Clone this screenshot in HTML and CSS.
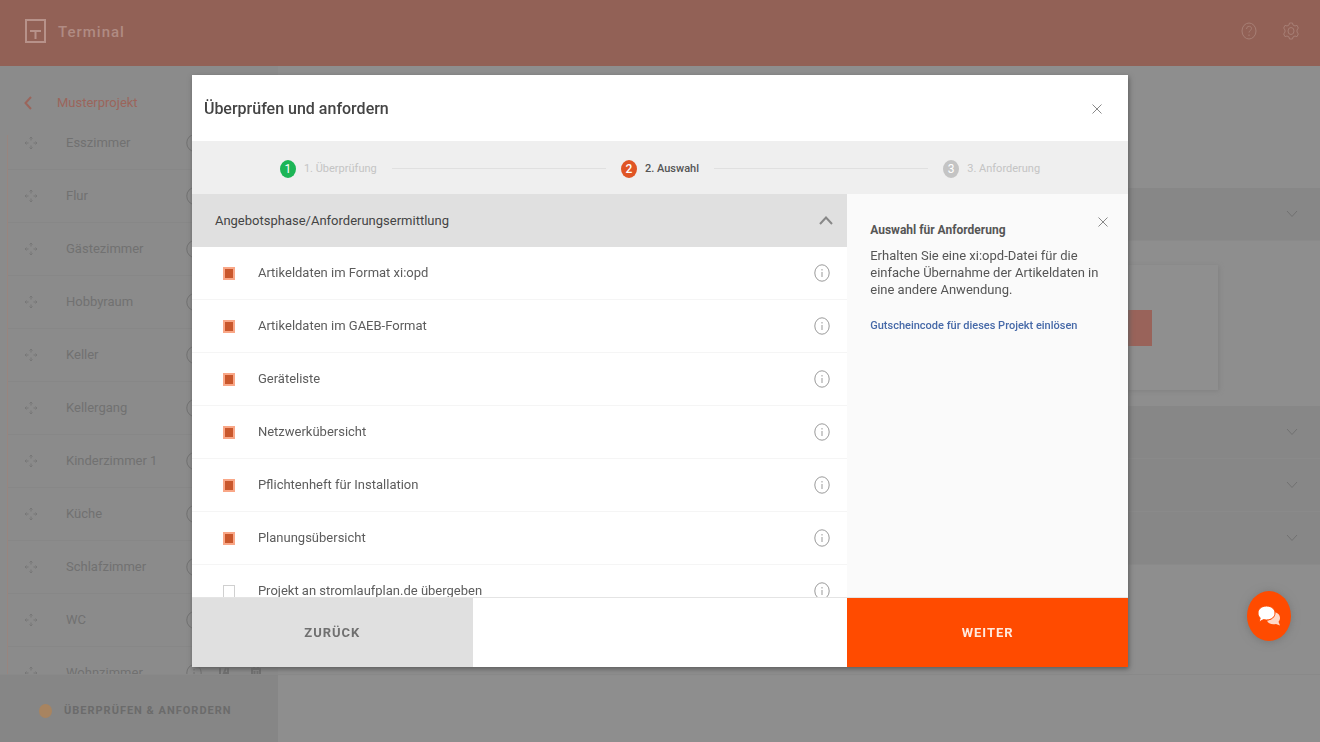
FILE: index.html
```html
<!DOCTYPE html>
<html lang="de">
<head>
<meta charset="utf-8">
<meta name="viewport" content="width=device-width, initial-scale=1">
<title>Terminal</title>
<link rel="stylesheet" href="styles.css">
</head>
<body>
<svg class="defs" aria-hidden="true">
  <symbol id="move" viewBox="0 0 14 14"><path d="M7 1v3.500M7 9.500V13M1 7h3.500M9.500 7H13M5.500 2.500 7 1l1.500 1.500M5.500 11.500 7 13l1.500-1.500M2.500 5.500 1 7l1.500 1.500M11.500 5.500 13 7l-1.500 1.500"/></symbol>
  <symbol id="info" viewBox="0 0 16 18" preserveAspectRatio="none"><ellipse cx="8" cy="9" rx="7.200" ry="8.200"/><path d="M8 8v5M8 5v1.500"/></symbol>
  <symbol id="down" viewBox="0 0 12 8"><path d="m1 1 5 5.500L11 1"/></symbol>
  <symbol id="up" viewBox="0 0 14 9"><path d="m1 8 6-6.500L13 8"/></symbol>
  <symbol id="close" viewBox="0 0 10 10"><path d="m.5.5 9 9m0-9-9 9"/></symbol>
  <symbol id="copy" viewBox="0 0 16 16"><path d="M4 3v11M10 3l-2 5h4v6M12 3v5"/></symbol>
  <symbol id="trash" viewBox="0 0 12 16"><path d="M1 4h10M4 4V1h4v3M2 4v11h8V4M4.500 6v7M7.500 6v7"/></symbol>
</svg>
<div class="page">
  <header class="topbar">
    <svg class="logo" viewBox="0 0 21 24" aria-hidden="true"><path d="M1 1h19v22H1zM5 12h11M10.500 12v8"/></svg>
    <span class="brand">Terminal</span>
    <button class="top-button" aria-label="Hilfe"><svg viewBox="0 0 16 18"><ellipse cx="8" cy="9" rx="7" ry="8"/><path d="M5.500 7c0-3.500 5-3.500 5-.5 0 2-2.500 2-2.500 4M8 12.500V14"/></svg></button>
    <button class="top-button" aria-label="Einstellungen"><svg viewBox="0 0 16 18"><path d="M6.500 1h3l.5 2 2 1 2-.7 1.300 2.700L14 8v2l1.300 2-1.300 2.700-2-.7-2 1-.5 2h-3L6 15l-2-1-2 .7L.7 12 2 10V8L.7 6 2 3.300 4 4l2-1z"/><ellipse cx="8" cy="9" rx="3" ry="3.500"/></svg></button>
  </header>
  <div class="workspace">
    <aside class="sidebar">
      <a class="project" href="#"><svg viewBox="0 0 8 14" aria-hidden="true"><path d="M7 1 1.500 7 7 13"/></svg>Musterprojekt</a>
      <div class="room-window">
        <ul class="rooms">
          <li><svg class="move"><use href="#move"/></svg><span>Esszimmer</span><svg class="info"><use href="#info"/></svg></li>
          <li><svg class="move"><use href="#move"/></svg><span>Flur</span><svg class="info"><use href="#info"/></svg></li>
          <li><svg class="move"><use href="#move"/></svg><span>Gästezimmer</span><svg class="info"><use href="#info"/></svg></li>
          <li><svg class="move"><use href="#move"/></svg><span>Hobbyraum</span><svg class="info"><use href="#info"/></svg></li>
          <li><svg class="move"><use href="#move"/></svg><span>Keller</span><svg class="info"><use href="#info"/></svg></li>
          <li><svg class="move"><use href="#move"/></svg><span>Kellergang</span><svg class="info"><use href="#info"/></svg></li>
          <li><svg class="move"><use href="#move"/></svg><span>Kinderzimmer 1</span><svg class="info"><use href="#info"/></svg></li>
          <li><svg class="move"><use href="#move"/></svg><span>Küche</span><svg class="info"><use href="#info"/></svg></li>
          <li><svg class="move"><use href="#move"/></svg><span>Schlafzimmer</span><svg class="info"><use href="#info"/></svg></li>
          <li><svg class="move"><use href="#move"/></svg><span>WC</span><svg class="info"><use href="#info"/></svg></li>
          <li><svg class="move"><use href="#move"/></svg><span>Wohnzimmer</span><svg class="info"><use href="#info"/></svg><svg class="copy"><use href="#copy"/></svg><svg class="trash"><use href="#trash"/></svg></li>
        </ul>
      </div>
    </aside>
    <main class="content">
      <section class="fold"><svg><use href="#down"/></svg></section>
      <section class="open"><div class="card"><span class="card-action"></span></div></section>
      <section class="fold"><svg><use href="#down"/></svg></section>
      <section class="fold"><svg><use href="#down"/></svg></section>
      <section class="fold"><svg><use href="#down"/></svg></section>
    </main>
  </div>
  <footer class="bottombar">
    <button class="review"><span class="dot"></span>ÜBERPRÜFEN &amp; ANFORDERN</button>
  </footer>
</div>

<div class="overlay">
  <div class="dialog" role="dialog" aria-modal="true" aria-labelledby="dialog-title">
    <header class="dialog-head">
      <h1 id="dialog-title">Überprüfen und anfordern</h1>
      <button class="close" aria-label="Schließen"><svg><use href="#close"/></svg></button>
    </header>
    <div class="steps">
      <div class="step done"><span class="number">1</span>1. Überprüfung</div>
      <span class="line"></span>
      <div class="step current"><span class="number">2</span>2. Auswahl</div>
      <span class="line"></span>
      <div class="step"><span class="number">3</span>3. Anforderung</div>
    </div>
    <div class="dialog-body">
      <section class="choices">
        <button class="phase">Angebotsphase/Anforderungsermittlung<svg><use href="#up"/></svg></button>
        <div class="choice"><label><input type="checkbox" checked>Artikeldaten im Format xi:opd</label><button aria-label="Info"><svg><use href="#info"/></svg></button></div>
        <div class="choice"><label><input type="checkbox" checked>Artikeldaten im GAEB-Format</label><button aria-label="Info"><svg><use href="#info"/></svg></button></div>
        <div class="choice"><label><input type="checkbox" checked>Geräteliste</label><button aria-label="Info"><svg><use href="#info"/></svg></button></div>
        <div class="choice"><label><input type="checkbox" checked>Netzwerkübersicht</label><button aria-label="Info"><svg><use href="#info"/></svg></button></div>
        <div class="choice"><label><input type="checkbox" checked>Pflichtenheft für Installation</label><button aria-label="Info"><svg><use href="#info"/></svg></button></div>
        <div class="choice"><label><input type="checkbox" checked>Planungsübersicht</label><button aria-label="Info"><svg><use href="#info"/></svg></button></div>
        <div class="choice"><label><input type="checkbox">Projekt an stromlaufplan.de übergeben</label><button aria-label="Info"><svg><use href="#info"/></svg></button></div>
      </section>
      <aside class="help">
        <div class="help-head">
          <h2>Auswahl für Anforderung</h2>
          <button class="close" aria-label="Hinweis schließen"><svg><use href="#close"/></svg></button>
        </div>
        <p>Erhalten Sie eine xi:opd-Datei für die einfache Übernahme der Artikeldaten in eine andere Anwendung.</p>
        <a href="#">Gutscheincode für dieses Projekt einlösen</a>
      </aside>
    </div>
    <footer class="dialog-foot">
      <button class="back">ZURÜCK</button>
      <button class="next">WEITER</button>
    </footer>
  </div>
</div>
<button class="chat" aria-label="Chat"><svg viewBox="0 0 24 22"><path class="rear" d="M16 7c4 0 7 2.500 7 6 0 1.500-.6 2.800-1.500 3.800L23 20.500l-4-1.500c-4 1-8-.3-9-3.500 5 0 8-4 6-8.500z"/><path class="front" d="M9.500 1C14.500 1 18 4 18 8s-3.500 7-8.500 7c-1 0-2-.1-3-.4L2 17l1.200-4C1.800 11.700 1 10 1 8c0-4 3.500-7 8.500-7z"/></svg></button>
</body>
</html>
```
FILE: styles.css
```css
* { box-sizing: border-box; }
body { margin: 0; font: 400 13px/18px Roboto, "Liberation Sans", sans-serif; color: #666; }
button { margin: 0; padding: 0; border: 0; background: none; font: inherit; color: inherit; }
svg { display: block; flex: none; fill: none; stroke: currentColor; }
a { text-decoration: none; }
.defs { display: none; }

.page { display: flex; flex-direction: column; height: 100vh; overflow: hidden; background: #8e8e8e; color: #717171; }
.topbar { display: flex; align-items: center; flex: none; height: 66px; padding: 0 21px 4px 25px; background: #926156; color: #a77f75; }
.logo { width: 21px; height: 24px; stroke: #b7928a; stroke-width: 2; }
.brand { flex: 1; padding-top: 2px; margin-left: 12px; font-size: 15px; font-weight: 500; letter-spacing: 1px; color: #b08b83; }
.top-button { margin-left: 26px; }
.top-button svg { width: 16px; height: 18px; }
.workspace { display: flex; flex: 1; min-height: 0; }
.sidebar { display: flex; flex-direction: column; flex: none; width: 278px; background: #8b8b8b; }
.project { display: flex; align-items: center; flex: none; gap: 25px; height: 69px; padding: 4px 24px 0; color: #9b655b; }
.project svg { width: 8px; height: 14px; stroke-width: 2; }
.room-window { flex: 1; min-height: 0; margin-left: 7px; overflow: hidden; border-left: 1px solid #98857f; }
.rooms { margin: -18px 0 0; padding: 0; list-style: none; }
.rooms li { display: flex; align-items: center; height: 53px; padding-left: 16px; border-bottom: 1px solid #878787; }
.rooms span { width: 120px; margin-left: 28px; }
.move { width: 14px; height: 14px; stroke: #777; stroke-width: 1; }
.rooms .info { width: 16px; height: 18px; stroke-width: 1; }
.copy { width: 16px; height: 16px; margin-left: 14px; stroke-width: 2; }
.trash { width: 12px; height: 16px; margin-left: 18px; stroke-width: 2; }
.content { flex: 1; padding-top: 122px; }
.fold { display: flex; align-items: center; justify-content: flex-end; height: 53px; padding-right: 22px; background: #878787; border-bottom: 1px solid #8a8a8a; }
.fold svg { width: 12px; height: 8px; stroke-width: 1; }
.open { height: 165px; padding: 24px 102px 16px 24px; }
.card { display: flex; align-items: center; justify-content: flex-end; height: 125px; padding-right: 66px; background: #8f8f8f; box-shadow: 1px 1px 5px #808080; }
.card-action { width: 120px; height: 36px; background: #99635a; }
.bottombar { flex: none; height: 68px; border-top: 1px solid #898989; }
.review { display: flex; align-items: center; gap: 12px; width: 278px; height: 100%; padding: 4px 0 0 39px; background: #868686; color: #6b6b6b; font-size: 11px; font-weight: 700; letter-spacing: 1px; white-space: nowrap; }
.dot { width: 13px; height: 14px; border-radius: 50%; background: #a88460; }

.overlay { position: fixed; inset: 0; display: flex; align-items: center; justify-content: center; }
.dialog { display: flex; flex-direction: column; width: calc(71% - 1px); height: calc(100vh - 150px); background: #fff; box-shadow: 1px 2px 5px #5c5c5c; }
.dialog-head { display: flex; align-items: center; justify-content: space-between; flex: none; height: 66px; padding: 2px 26px 0 12px; }
h1 { margin: 0; font-size: 16px; line-height: 24px; font-weight: 500; color: #444; }
.close svg { width: 10px; height: 10px; color: #888; }
.steps { display: flex; align-items: center; flex: none; gap: 15px; height: 53px; padding: 2px 88px 0; background: #efefef; }
.step { display: flex; align-items: center; gap: 8px; font-size: 11px; color: #c4c4c4; white-space: nowrap; }
.number { width: 16px; height: 18px; border-radius: 50%; background: #c4c4c4; color: #fff; font-size: 12px; text-align: center; }
.done .number { background: #1cb556; }
.current { font-weight: 500; color: #555; }
.current .number { background: #e05525; }
.line { flex: 1; height: 1px; background: #e0e0e0; }
.dialog-body { display: flex; flex: 1; min-height: 0; }
.choices { width: 70%; overflow: hidden; }
.phase { display: flex; align-items: center; justify-content: space-between; width: 100%; height: 53px; padding: 0 14px 0 23px; background: #e0e0e0; color: #444; }
.phase svg { width: 14px; height: 9px; stroke: #888; stroke-width: 2; }
.choice { display: flex; align-items: center; justify-content: space-between; height: 53px; padding: 0 17px 0 31px; border-bottom: 1px solid #f5f5f5; color: #5c5c5c; }
.choice label { display: flex; align-items: center; gap: 23px; }
.choice input { appearance: none; width: 12px; height: 13px; margin: 0; border: 1px solid #d0d0d0; background: #fff; }
.choice input:checked { border: 2px solid #f9a787; background: #c9572c; }
.choice svg { width: 16px; height: 18px; stroke: #999; stroke-width: 1; }
.help { flex: 1; padding: 22px 20px 0 23px; background: #fafafa; }
.help-head { display: flex; justify-content: space-between; }
h2 { margin: 5px 0 8px; font-size: 12px; line-height: 18px; font-weight: 700; color: #555; }
.help .close { height: 12px; }
p { margin: 0 0 18px; line-height: 17px; font-size: 13px; color: #555; }
.help a { font-size: 11px; line-height: 18px; font-weight: 500; color: #4669a8; }
.dialog-foot { display: flex; justify-content: space-between; flex: none; height: 70px; border-top: 1px solid #e4e4e4; font-size: 13px; font-weight: 700; }
.back, .next { width: 30%; letter-spacing: 1px; }
.back { background: #e0e0e0; color: #707070; }
.next { background: #ff4b00; color: #ffe9dd; }
.chat { position: fixed; right: 29px; bottom: 101px; display: flex; align-items: center; justify-content: center; width: 44px; height: 50px; border-radius: 50%; background: #ff4b00; box-shadow: 0 1px 8px #777; }
.chat svg { width: 24px; height: 22px; stroke: none; }
.front { fill: #fff; stroke: #ff4b00; }
.rear { fill: #ffd9c8; }
```
